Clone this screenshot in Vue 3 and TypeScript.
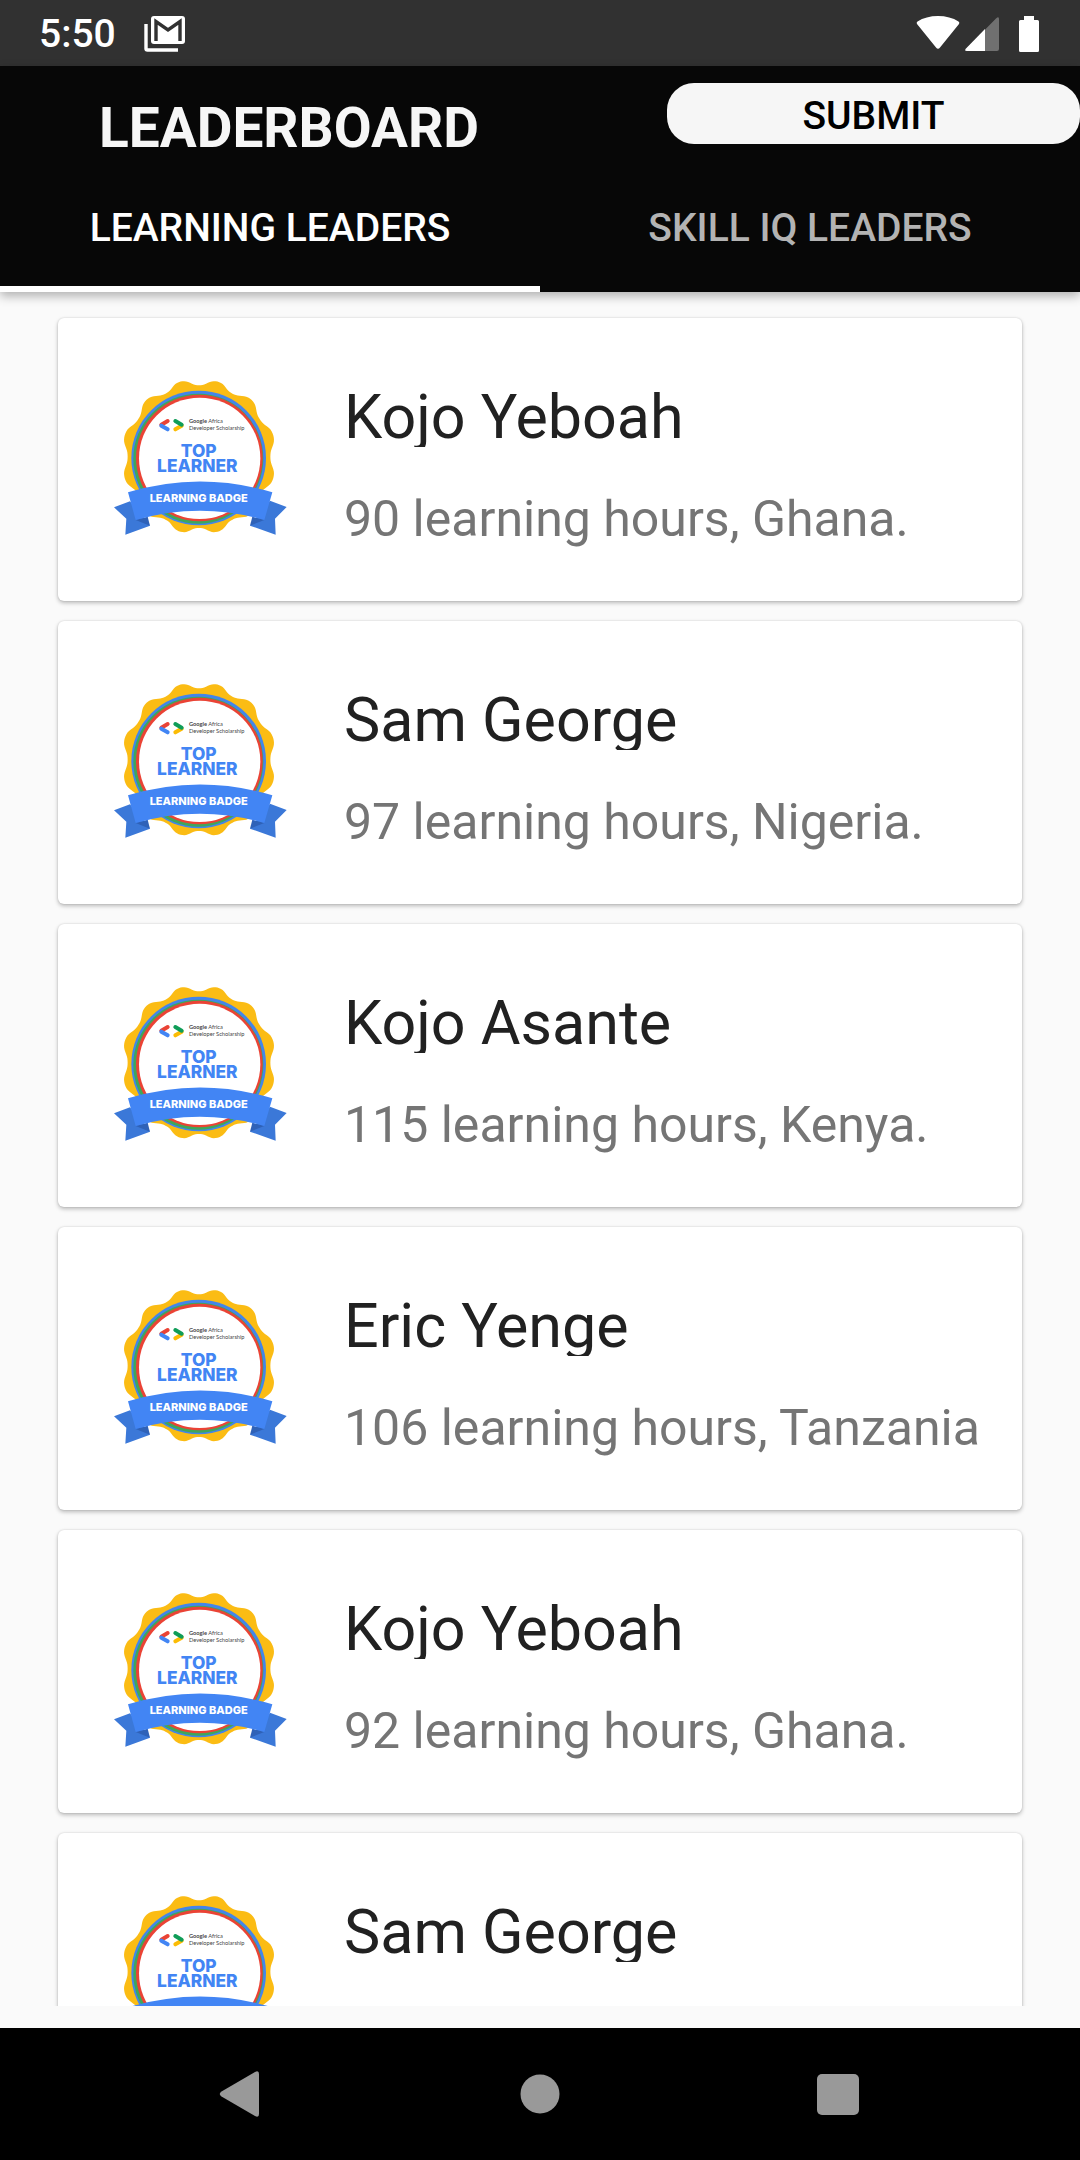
<script setup lang="ts">
import { ref } from 'vue'

interface Leader {
  name: string
  hours: number
  country: string
}

const leaders: Leader[] = [
  { name: 'Kojo Yeboah', hours: 90, country: 'Ghana' },
  { name: 'Sam George', hours: 97, country: 'Nigeria' },
  { name: 'Kojo Asante', hours: 115, country: 'Kenya' },
  { name: 'Eric Yenge', hours: 106, country: 'Tanzania' },
  { name: 'Kojo Yeboah', hours: 92, country: 'Ghana' },
  { name: 'Sam George', hours: 97, country: 'Nigeria' },
]

const tabs = ['LEARNING LEADERS', 'SKILL IQ LEADERS']
const activeTab = ref(0)

// Twelve-lobed wavy edge of the gold seal
const sealPoints: string = Array.from({ length: 240 }, (_, i) => {
  const angle = (i / 240) * Math.PI * 2
  const radius = 223 - 10 * Math.sin(1.1 * Math.cos(12 * angle))
  const turned = angle - 0.04 * Math.sin(2 * angle)
  const x = 297 + radius * Math.sin(turned)
  const y = 260 - radius * Math.cos(turned)
  return `${x.toFixed(1)},${y.toFixed(1)}`
}).join(' ')
</script>

<template>
  <div class="screen">
    <div class="status">
      <span class="time">5:50</span>
      <svg class="mail" width="42" height="36" viewBox="0 0 42 36" aria-hidden="true">
        <path d="M2 8V32.500Q2 34 3.500 34H34" fill="none" stroke="#fff" stroke-width="3.400" />
        <rect x="7" y="0" width="34" height="28" rx="3" fill="#fff" />
        <path d="M12 25V5.500L24 14L36 5.500V25" fill="none" stroke="#313131" stroke-width="3.400" />
      </svg>
      <span class="spacer"></span>
      <svg width="124" height="38" viewBox="0 0 124 38" aria-hidden="true">
        <path d="M1 9Q0 7.500 1.500 6.500Q10 1 22 1T42.500 6.500Q44 7.500 43 9L24 32.500Q22 35 20 32.500Z" fill="#fff" />
        <path d="M50 34L80 3.500Q83 1 83 4V34Q83 36 81 36H51Q48 36 50 34Z" fill="#707070" />
        <path d="M50 33.500L69 14V36H51Q48 36 50 33.500Z" fill="#fff" />
        <path d="M108 1H118V5H121.500Q123 5 123 6.500V35.500Q123 37 121.500 37H104.500Q103 37 103 35.500V6.500Q103 5 104.500 5H108Z" fill="#fff" />
      </svg>
    </div>

    <header class="appbar">
      <div class="titlebar">
        <h1 class="title">LEADERBOARD</h1>
        <button class="submit" type="button">SUBMIT</button>
      </div>
      <div class="tabs" role="tablist">
        <button
          v-for="(tab, i) in tabs"
          :key="tab"
          type="button"
          role="tab"
          class="tab"
          :class="{ active: activeTab === i }"
          :aria-selected="activeTab === i"
          @click="activeTab = i"
        >
          {{ tab }}
        </button>
      </div>
    </header>

    <main class="content">
      <ul class="list">
        <li v-for="(leader, i) in leaders" :key="i" class="card">
          <svg class="badge" width="200" height="180" viewBox="0 0 600 540" role="img" aria-label="Top learner badge">
            <polygon :points="sealPoints" fill="#fbbc14" />
            <circle cx="296" cy="264" r="202" fill="#4385ea" />
            <circle cx="295" cy="266" r="195" fill="#3fa75a" />
            <circle cx="298" cy="264" r="190" fill="#ea4335" />
            <circle cx="299" cy="265" r="182" fill="#fff" />
            <g fill="none" stroke-width="12" stroke-linecap="round">
              <path d="M184 164L203 153" stroke="#ea4335" />
              <path d="M184 167L203 178" stroke="#4285f4" />
              <path d="M245 167L226 178" stroke="#fbbc04" />
              <path d="M226 153L245 164" stroke="#0f9d58" />
            </g>
            <g class="fine" fill="#444">
              <text x="267" y="160"><tspan font-weight="700">Google</tspan> Africa</text>
              <text x="267" y="180">Developer Scholarship</text>
            </g>
            <g class="award" text-anchor="middle" fill="#4285f4">
              <text x="296" y="261">TOP</text>
              <text x="292" y="305">LEARNER</text>
            </g>
            <path d="M42 412L90 394L150 467L76 494L79 446Z" fill="#3b78d8" />
            <path d="M560 411L510 392L450 467L527 494L525 446Z" fill="#3b78d8" />
            <path d="M107 450L143 440L150 467Z" fill="#2f62b8" />
            <path d="M493 450L457 440L450 467Z" fill="#2f62b8" />
            <path d="M84 367Q300 302 517 367L493 450Q300 394 107 450Z" fill="#4285f4" />
            <text class="ribbon" x="296" y="396" text-anchor="middle" fill="#fff">LEARNING BADGE</text>
          </svg>
          <div class="info">
            <h2 class="name">{{ leader.name }}</h2>
            <p class="detail">{{ leader.hours }} learning hours, {{ leader.country }}.</p>
          </div>
        </li>
      </ul>
    </main>

    <nav class="navbar">
      <button type="button" aria-label="Back">
        <svg width="48" height="48" viewBox="0 0 48 48">
          <path d="M3.500 21.500L37 2Q41 0 41 4V44Q41 48 37 46L3.500 26.500Q0 24 3.500 21.500Z" fill="#999" />
        </svg>
      </button>
      <button type="button" aria-label="Home">
        <svg width="48" height="48" viewBox="0 0 48 48">
          <circle cx="24" cy="24" r="19.500" fill="#999" />
        </svg>
      </button>
      <button type="button" aria-label="Recent apps">
        <svg width="48" height="48" viewBox="0 0 48 48">
          <rect x="3" y="4" width="42" height="41" rx="5" fill="#999" />
        </svg>
      </button>
    </nav>
  </div>
</template>

<style>
body {
  margin: 0;
}
</style>

<style scoped>
.screen {
  display: flex;
  flex-direction: column;
  height: 100vh;
  background: #fafafa;
  font-family: Roboto, sans-serif;
}

button {
  margin: 0;
  padding: 0;
  border: 0;
  background: none;
  font: inherit;
  cursor: pointer;
}

.status {
  display: flex;
  align-items: center;
  flex: none;
  box-sizing: border-box;
  height: 66px;
  padding: 2px 40px 0 39px;
  background: #313131;
}

.time {
  color: #fff;
  font-size: 39px;
  font-weight: 500;
  line-height: 46px;
}

.mail {
  margin-left: 28px;
}

.spacer {
  flex: 1;
}

.appbar {
  position: relative;
  z-index: 1;
  flex: none;
  background: #070707;
  box-shadow: 0 4px 10px rgba(0, 0, 0, 0.3);
}

.titlebar {
  display: flex;
  align-items: flex-start;
  justify-content: space-between;
  height: 104px;
}

.title {
  margin: 0;
  padding: 29px 0 0 99px;
  color: #f6f6f6;
  font-size: 55px;
  font-weight: 700;
  line-height: 66px;
}

.submit {
  width: 413px;
  height: 61px;
  margin-top: 17px;
  padding-top: 4px;
  border-radius: 27px;
  background: #f6f6f6;
  color: #000;
  font-size: 39px;
  font-weight: 500;
  line-height: 46px;
}

.tabs {
  display: flex;
}

.tab {
  flex: 1;
  height: 122px;
  border-bottom: 6px solid transparent;
  color: #b3b3b3;
  font-size: 39px;
  font-weight: 500;
  line-height: 46px;
}

.tab.active {
  border-bottom-color: #fff;
  color: #fff;
}

.fine {
  font-family: Lato, sans-serif;
  font-size: 17px;
}

.award {
  font-family: Inter, sans-serif;
  font-size: 52px;
  font-weight: 800;
}

.ribbon {
  font-family: Inter, sans-serif;
  font-size: 33px;
  font-weight: 800;
}

.content {
  flex: 1;
  min-height: 0;
  margin-bottom: 22px;
  overflow-y: auto;
  scrollbar-width: none;
}

.list {
  display: flex;
  flex-direction: column;
  gap: 20px;
  margin: 0;
  padding: 26px 58px;
  list-style: none;
}

.card {
  display: flex;
  align-items: flex-start;
  gap: 44px;
  padding: 52px 43px 51px 42px;
  border-radius: 6px;
  background: #fff;
  box-shadow: 0 2px 4px rgba(0, 0, 0, 0.26), 0 0 2px rgba(0, 0, 0, 0.14);
}

.badge {
  flex: none;
}

.info {
  flex: 1;
  min-width: 0;
  padding-top: 12px;
}

.name {
  height: 65px;
  margin: 0 0 43px;
  overflow: hidden;
  color: #212121;
  font-size: 61px;
  font-weight: 400;
  line-height: 70px;
  white-space: nowrap;
}

.detail {
  margin: 0;
  overflow: hidden;
  color: #757575;
  font-size: 50px;
  line-height: 58px;
  white-space: nowrap;
}

.navbar {
  display: flex;
  flex: none;
  justify-content: center;
  height: 132px;
  background: #000;
}

.navbar button {
  display: flex;
  align-items: center;
  justify-content: center;
  width: 298px;
}
</style>
